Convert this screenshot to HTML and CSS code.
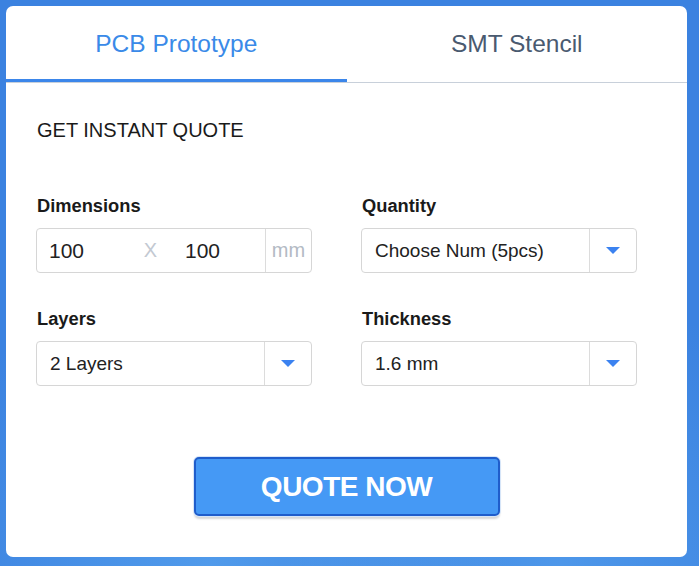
FILE: index.html
```html
<!DOCTYPE html>
<html lang="en">
<head>
<meta charset="utf-8">
<title>Instant Quote</title>
<link rel="stylesheet" href="styles.css">
</head>
<body>
<div class="card">
  <div class="tabs">
    <div class="tab active">PCB Prototype</div>
    <div class="tab">SMT Stencil</div>
  </div>
  <div class="body">
    <h2 class="heading">GET INSTANT QUOTE</h2>
    <div class="grid">
      <div class="field">
        <div class="label">Dimensions</div>
        <div class="box dims">
          <div class="dim-val">100</div>
          <div class="dim-x">X</div>
          <div class="dim-val">100</div>
          <div class="dim-unit">mm</div>
        </div>
      </div>
      <div class="field">
        <div class="label">Quantity</div>
        <div class="box select">
          <div class="sel-val">Choose Num (5pcs)</div>
          <div class="sel-arrow"><span class="tri"></span></div>
        </div>
      </div>
      <div class="field">
        <div class="label">Layers</div>
        <div class="box select">
          <div class="sel-val">2 Layers</div>
          <div class="sel-arrow"><span class="tri"></span></div>
        </div>
      </div>
      <div class="field">
        <div class="label">Thickness</div>
        <div class="box select">
          <div class="sel-val">1.6 mm</div>
          <div class="sel-arrow"><span class="tri"></span></div>
        </div>
      </div>
    </div>
  </div>
  <div class="actions">
    <button class="quote-btn">QUOTE NOW</button>
  </div>
</div>
</body>
</html>
```
FILE: styles.css
```css
html, body {
  margin: 0;
  padding: 0;
}
body {
  width: 699px;
  height: 566px;
  overflow: hidden;
  background: #3b82e0;
  background-image:
    radial-gradient(circle at 30% 100%, rgba(120, 200, 255, 0.35) 0, rgba(120, 200, 255, 0) 40%),
    radial-gradient(circle at 80% 100%, rgba(120, 200, 255, 0.3) 0, rgba(120, 200, 255, 0) 35%);
  font-family: "Liberation Sans", Arial, sans-serif;
  padding: 6px 12px 9px 6px;
  box-sizing: border-box;
}
.card {
  width: 681px;
  height: 551px;
  background: #ffffff;
  border-radius: 7px;
  overflow: hidden;
}
.tabs {
  display: flex;
  height: 76px;
  border-bottom: 1px solid #c8d0da;
}
.tab {
  flex: 1;
  display: flex;
  align-items: center;
  justify-content: center;
  font-size: 24.5px;
  line-height: 24px;
  color: #4a5a70;
}
.tab.active {
  color: #3a8ae8;
  box-shadow: inset 0 -3px 0 #3b86ea;
}
.body {
  padding: 35px 0 0 30px;
}
.heading {
  margin: 0 0 0 1px;
  font-size: 20px;
  line-height: 24px;
  font-weight: normal;
  color: #1a1a1a;
}
.grid {
  margin-top: 53px;
  display: grid;
  grid-template-columns: 276px 276px;
  column-gap: 49px;
  row-gap: 35px;
}
.label {
  font-size: 18.3px;
  line-height: 22px;
  font-weight: bold;
  color: #1a1a1a;
  margin: 0 0 11px 1px;
}
.box {
  height: 45px;
  box-sizing: border-box;
  border: 1px solid #d6d6d6;
  border-radius: 4px;
  display: flex;
  align-items: stretch;
  color: #222;
}
.dims .dim-val {
  width: 92px;
  padding-left: 12px;
  box-sizing: border-box;
  font-size: 21px;
  display: flex;
  align-items: center;
}
.dims .dim-val:first-child {
  width: 91px;
}
.dim-x {
  width: 45px;
  display: flex;
  align-items: center;
  justify-content: center;
  font-size: 20px;
  color: #c3c9d2;
}
.dim-unit {
  flex: 1;
  border-left: 1px solid #dcdcdc;
  display: flex;
  align-items: center;
  justify-content: center;
  font-size: 20px;
  color: #b3bac4;
}
.select .sel-val {
  flex: 1;
  padding-left: 13px;
  display: flex;
  align-items: center;
  font-size: 19px;
}
.sel-arrow {
  width: 46px;
  border-left: 1px solid #dcdcdc;
  display: flex;
  align-items: center;
  justify-content: center;
}
.tri {
  width: 0;
  height: 0;
  border-left: 7px solid transparent;
  border-right: 7px solid transparent;
  border-top: 7px solid #3b82f0;
}
.actions {
  display: flex;
  justify-content: center;
  margin-top: 71px;
}
.quote-btn {
  width: 306px;
  height: 59px;
  box-sizing: border-box;
  background: #4599f5;
  border: 2px solid #1f5dcb;
  border-radius: 5px;
  box-shadow: 0 0 0 1px #d6e5f8, 0 3px 2px rgba(0, 0, 0, 0.16);
  color: #ffffff;
  font-family: "Liberation Sans", Arial, sans-serif;
  font-weight: bold;
  font-size: 28px;
  letter-spacing: -0.5px;
  padding: 0;
  display: flex;
  align-items: center;
  justify-content: center;
}
```
